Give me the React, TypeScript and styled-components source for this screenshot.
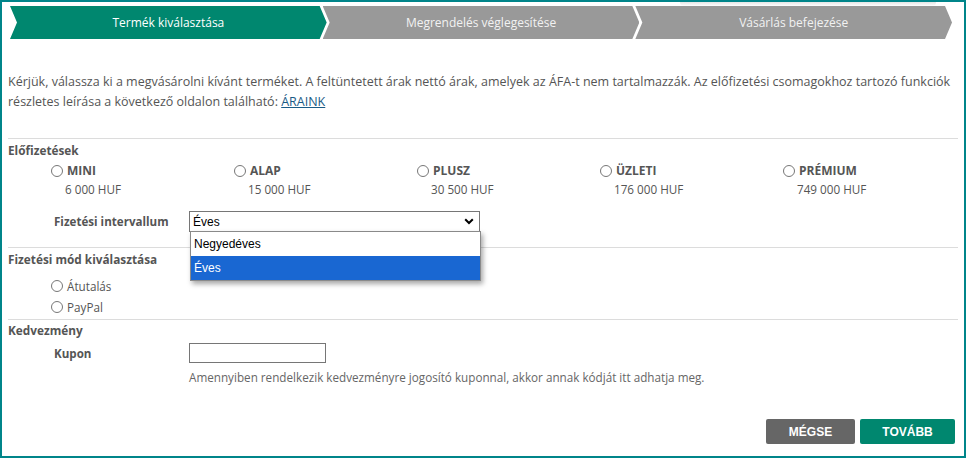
import React from "react";
import styled, { createGlobalStyle } from "styled-components";

const GlobalStyle = createGlobalStyle`
  html, body { margin: 0; padding: 0; background: #fff; }
  body { font-family: "Open Sans", "Liberation Sans", sans-serif; color: #555; }
  * { box-sizing: border-box; }
`;

const Frame = styled.div`
  position: relative;
  width: 966px;
  height: 458px;
  border: 2px solid #00858a;
  padding: 0 6px;
`;

const TopShade = styled.div`
  position: absolute;
  top: 0;
  left: 678px;
  width: 256px;
  height: 4px;
  border-radius: 0 0 6px 6px;
  background: linear-gradient(rgba(0, 0, 0, 0.1), rgba(0, 0, 0, 0));
`;

const Steps = styled.div`
  display: flex;
  margin: 4px 6px 0 2px;
  height: 33px;
`;

const Step = styled.div<{ $active?: boolean; $first?: boolean }>`
  flex: 1;
  margin-left: ${(p) => (p.$first ? "0" : "-4px")};
  display: flex;
  align-items: center;
  justify-content: center;
  background: ${(p) => (p.$active ? "#00876f" : "#999999")};
  color: ${(p) => (p.$active ? "#ffffff" : "#f2f2f2")};
  font-size: 12px;
  clip-path: polygon(0 0, calc(100% - 7px) 0, 100% 50%, calc(100% - 7px) 100%, 0 100%, 7px 50%);
`;

const Intro = styled.p`
  margin: 33px 0 0;
  font-size: 12.5px;
  line-height: 20px;
  color: #555;
`;

const Link = styled.a`
  color: #1a5b86;
  text-decoration: underline;
`;

const Divider = styled.div<{ $mt: number }>`
  margin-top: ${(p) => p.$mt}px;
  border-top: 1px solid #dcdcdc;
`;

const SectionTitle = styled.div<{ $mt: number }>`
  margin-top: ${(p) => p.$mt}px;
  font-size: 11.8px;
  font-weight: 700;
  line-height: 18px;
  color: #555;
`;

const Plans = styled.div`
  display: grid;
  grid-template-columns: repeat(5, 183px);
  padding-left: 43px;
  margin-top: 2px;
`;

const Plan = styled.div`
  display: flex;
  flex-direction: column;
`;

const RadioRow = styled.label<{ $h?: number }>`
  display: flex;
  align-items: center;
  gap: 4px;
  height: ${(p) => p.$h ?? 19}px;
  font-size: 11.7px;
  color: #555;
`;

const Circle = styled.span`
  display: inline-block;
  width: 12px;
  height: 12px;
  border: 1px solid #777;
  border-radius: 50%;
  background: #fff;
  flex: none;
`;

const PlanName = styled.span`
  font-weight: 700;
  font-size: 12px;
`;

const Price = styled.div`
  padding-left: 14px;
  font-size: 11.7px;
  line-height: 18px;
  color: #555;
`;

const FieldRow = styled.div<{ $mt: number }>`
  display: flex;
  align-items: center;
  margin-top: ${(p) => p.$mt}px;
  padding-left: 46px;
`;

const FieldLabel = styled.div`
  width: 135px;
  font-size: 11.6px;
  font-weight: 700;
  color: #555;
`;

const SelectWrap = styled.div`
  position: relative;
  width: 291px;
`;

const SelectBox = styled.div`
  display: flex;
  align-items: center;
  justify-content: space-between;
  height: 21px;
  padding: 0 5px 0 3px;
  border: 1px solid #767676;
  background: #fff;
  font-family: "Liberation Sans", Arial, sans-serif;
  font-size: 12px;
  color: #000;
`;

const DropList = styled.div`
  position: absolute;
  top: 20px;
  left: 1px;
  width: 291px;
  border: 1px solid #8a8a8a;
  background: #fff;
  box-shadow: 2px 3px 5px rgba(0, 0, 0, 0.35);
  z-index: 5;
`;

const Option = styled.div<{ $selected?: boolean }>`
  height: 24px;
  display: flex;
  align-items: center;
  padding-left: 3px;
  font-family: "Liberation Sans", Arial, sans-serif;
  font-size: 12px;
  background: ${(p) => (p.$selected ? "#1967d2" : "#fff")};
  color: ${(p) => (p.$selected ? "#fff" : "#000")};
`;

const MethodList = styled.div`
  margin-top: 7px;
  padding-left: 43px;
  display: flex;
  flex-direction: column;
`;

const TextInput = styled.div`
  width: 137px;
  height: 20px;
  border: 1px solid #767676;
  background: #fff;
`;

const Help = styled.div`
  margin-top: 5px;
  padding-left: 181px;
  font-size: 11.7px;
  line-height: 18px;
  color: #666;
`;

const Actions = styled.div`
  display: flex;
  justify-content: flex-end;
  gap: 5px;
  margin-top: 33px;
  padding-right: 3px;
`;

const Button = styled.button<{ $primary?: boolean; $w: number }>`
  width: ${(p) => p.$w}px;
  height: 25px;
  border: none;
  border-radius: 2px;
  background: ${(p) => (p.$primary ? "#00876f" : "#666666")};
  color: #fff;
  font-family: "Liberation Sans", Arial, sans-serif;
  font-weight: 700;
  font-size: 12px;
  padding: 0;
`;

const plans = [
  { name: "MINI", price: "6 000 HUF" },
  { name: "ALAP", price: "15 000 HUF" },
  { name: "PLUSZ", price: "30 500 HUF" },
  { name: "ÜZLETI", price: "176 000 HUF" },
  { name: "PRÉMIUM", price: "749 000 HUF" },
];

export default function App() {
  return (
    <>
      <GlobalStyle />
      <Frame>
        <TopShade />
        <Steps>
          <Step $active $first>Termék kiválasztása</Step>
          <Step>Megrendelés véglegesítése</Step>
          <Step>Vásárlás befejezése</Step>
        </Steps>

        <Intro>
          Kérjük, válassza ki a megvásárolni kívánt terméket. A feltüntetett árak nettó árak, amelyek az ÁFA-t nem
          tartalmazzák. Az előfizetési csomagokhoz tartozó funkciók részletes leírása a következő oldalon található:{" "}
          <Link href="#">ÁRAINK</Link>
        </Intro>

        <Divider $mt={26} />
        <SectionTitle $mt={2}>Előfizetések</SectionTitle>
        <Plans>
          {plans.map((p) => (
            <Plan key={p.name}>
              <RadioRow>
                <Circle />
                <PlanName>{p.name}</PlanName>
              </RadioRow>
              <Price>{p.price}</Price>
            </Plan>
          ))}
        </Plans>

        <FieldRow $mt={13}>
          <FieldLabel>Fizetési intervallum</FieldLabel>
          <SelectWrap>
            <SelectBox>
              <span>Éves</span>
              <svg width="10" height="7" viewBox="0 0 10 7">
                <path d="M1.2 1.2 L5 5 L8.8 1.2" fill="none" stroke="#000" strokeWidth="2" />
              </svg>
            </SelectBox>
            <DropList>
              <Option>Negyedéves</Option>
              <Option $selected>Éves</Option>
            </DropList>
          </SelectWrap>
        </FieldRow>

        <Divider $mt={15} />
        <SectionTitle $mt={2}>Fizetési mód kiválasztása</SectionTitle>
        <MethodList>
          <RadioRow $h={21}>
            <Circle />
            <span>Átutalás</span>
          </RadioRow>
          <RadioRow $h={21}>
            <Circle />
            <span>PayPal</span>
          </RadioRow>
        </MethodList>

        <Divider $mt={2} />
        <SectionTitle $mt={1}>Kedvezmény</SectionTitle>
        <FieldRow $mt={4}>
          <FieldLabel>Kupon</FieldLabel>
          <TextInput />
        </FieldRow>
        <Help>Amennyiben rendelkezik kedvezményre jogosító kuponnal, akkor annak kódját itt adhatja meg.</Help>

        <Actions>
          <Button $w={89}>MÉGSE</Button>
          <Button $w={95} $primary>TOVÁBB</Button>
        </Actions>
      </Frame>
    </>
  );
}
